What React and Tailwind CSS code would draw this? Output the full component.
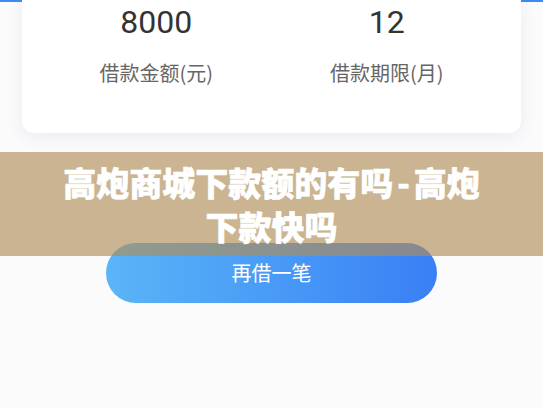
export default function App() {
  const cjk = { fontFamily: '"Noto Sans CJK SC", "Noto Sans", sans-serif' };
  const digits = { fontFamily: 'Roboto, "Noto Sans", sans-serif' };
  return (
    <div className="relative w-[543px] h-[408px] overflow-hidden bg-[#fbfbfc]" style={cjk}>
      {/* tail of the blue header behind the summary card */}
      <div className="h-[2px] bg-[#3f88f5]" />

      {/* loan summary card */}
      <div className="relative -mt-[2px] mx-[22px] rounded-b-[12px] bg-white px-[19px] pt-[2px] pb-[46px] shadow-[0_4px_16px_rgba(120,135,165,0.13)]">
        <div className="grid grid-cols-2">
          <div className="flex flex-col items-center">
            <div className="text-[32px] leading-[40px] text-[#333333]" style={digits}>8000</div>
            <div className="mt-[17px] text-[20px] leading-[28px] text-[#666666]">借款金额(元)</div>
          </div>
          <div className="flex flex-col items-center">
            <div className="text-[32px] leading-[40px] text-[#333333]" style={digits}>12</div>
            <div className="mt-[17px] text-[20px] leading-[28px] text-[#666666]">借款期限(月)</div>
          </div>
        </div>
      </div>

      {/* borrow again button */}
      <div className="mt-[110px] flex justify-center">
        <button className="h-[60px] w-[331px] rounded-full bg-gradient-to-r from-[#5bb5f7] to-[#3a7ff5] text-[20px] text-white">
          再借一笔
        </button>
      </div>

      {/* title banner laid over the page */}
      <div className="absolute left-0 right-0 top-[152px] z-10 flex h-[104px] items-center justify-center bg-[rgba(175,141,88,0.65)]">
        <div className="text-center text-[33px] font-black leading-[44px] text-white [-webkit-text-stroke:0.6px_white]">
          高炮商城下款额的有吗<span className="px-[4px]">-</span>高炮
          <br />
          下款快吗
        </div>
      </div>
    </div>
  );
}
